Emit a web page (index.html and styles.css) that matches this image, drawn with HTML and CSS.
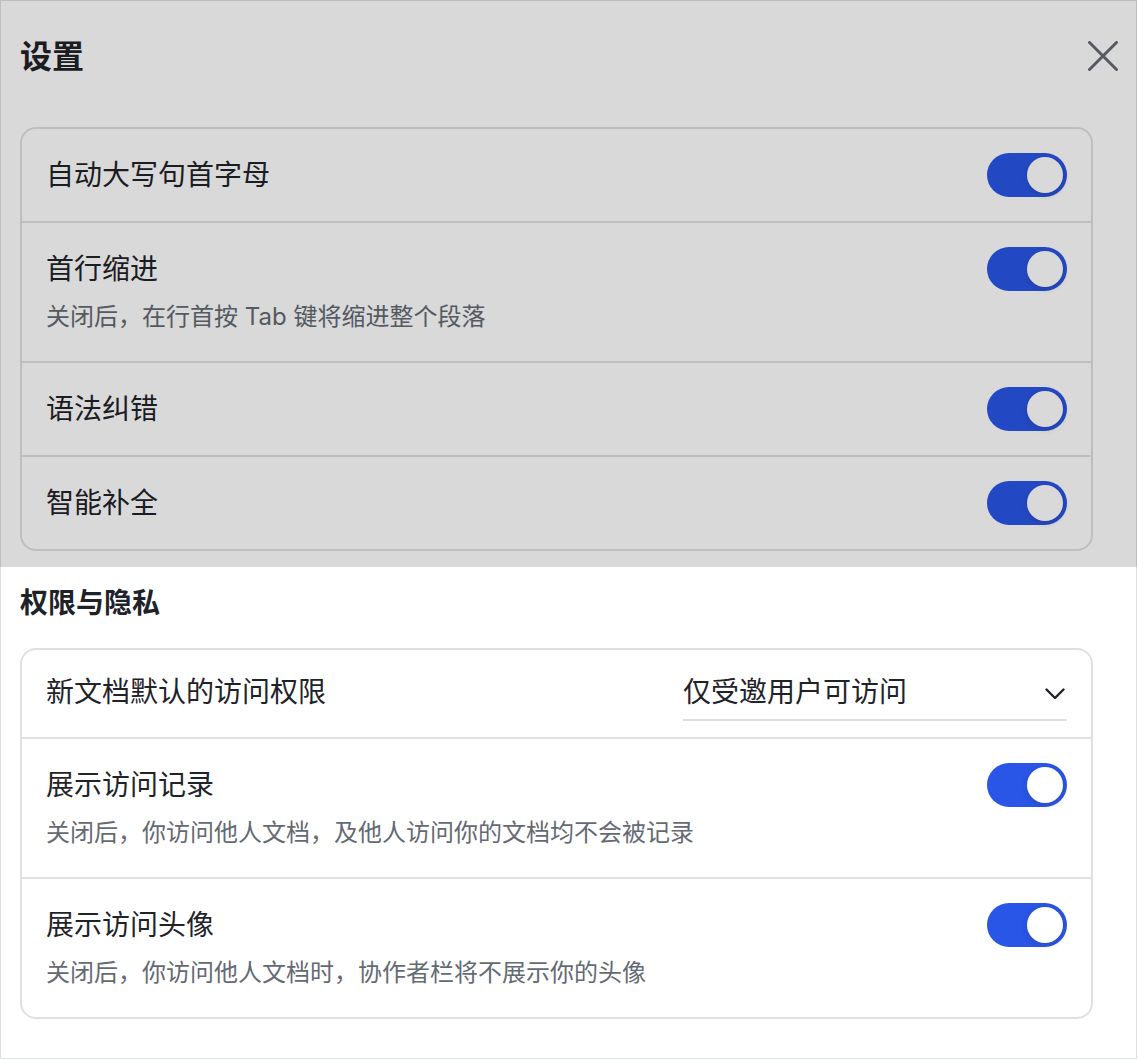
FILE: index.html
```html
<!DOCTYPE html>
<html>
<head>
    <meta charset="UTF-8">
    <title>设置</title>
    <link rel="stylesheet" href="styles.css">
</head>
<body>
    <div class="panel">
        <div class="panel-header">
            <h1 class="panel-title">设置</h1>
            <svg class="close" width="30" height="30" viewBox="0 0 30 30">
                <path d="M1.5 1.5 L28.5 28.5 M28.5 1.5 L1.5 28.5" />
            </svg>
        </div>

        <div class="card">
            <div class="row">
                <div class="row-text">
                    <div class="label">自动大写句首字母</div>
                </div>
                <span class="toggle on"><span class="knob"></span></span>
            </div>
            <div class="row">
                <div class="row-text">
                    <div class="label">首行缩进</div>
                    <div class="hint">关闭后，在行首按 Tab 键将缩进整个段落</div>
                </div>
                <span class="toggle on"><span class="knob"></span></span>
            </div>
            <div class="row">
                <div class="row-text">
                    <div class="label">语法纠错</div>
                </div>
                <span class="toggle on"><span class="knob"></span></span>
            </div>
            <div class="row">
                <div class="row-text">
                    <div class="label">智能补全</div>
                </div>
                <span class="toggle on"><span class="knob"></span></span>
            </div>
        </div>

        <h2 class="section-title">权限与隐私</h2>

        <div class="card">
            <div class="row row-select">
                <div class="row-text">
                    <div class="label">新文档默认的访问权限</div>
                </div>
                <div class="select">
                    <span class="select-value">仅受邀用户可访问</span>
                    <svg class="chevron" width="20" height="12" viewBox="0 0 20 12">
                        <path d="M1.5 1.5 L10 10 L18.5 1.5" />
                    </svg>
                </div>
            </div>
            <div class="row">
                <div class="row-text">
                    <div class="label">展示访问记录</div>
                    <div class="hint">关闭后，你访问他人文档，及他人访问你的文档均不会被记录</div>
                </div>
                <span class="toggle on"><span class="knob"></span></span>
            </div>
            <div class="row">
                <div class="row-text">
                    <div class="label">展示访问头像</div>
                    <div class="hint">关闭后，你访问他人文档时，协作者栏将不展示你的头像</div>
                </div>
                <span class="toggle on"><span class="knob"></span></span>
            </div>
        </div>
    </div>

    <!-- mask over the editor block -->
    <div class="mask"></div>
</body>
</html>
```

FILE: styles.css
```css
body {
    margin: 0;
    font-family: Inter, "Noto Sans CJK SC", sans-serif;
    color: #1f2329;
    background: #fff;
}

.panel {
    width: 1137px;
    height: 1059px;
    box-sizing: border-box;
    border: 1px solid #dee0e3;
    padding: 0 18px 0 19px;
}

.panel-header {
    height: 111px;
    display: flex;
    align-items: center;
    justify-content: space-between;
}

.panel-title {
    margin: 0;
    font-size: 32px;
    line-height: 48px;
    font-weight: 700;
}

.close {
    margin-top: -2px;
}

.close path {
    stroke: #646a73;
    stroke-width: 3;
    stroke-linecap: round;
    fill: none;
}

.card {
    margin-right: 25px;
    border: 2px solid #dee0e3;
    border-radius: 16px;
}

.panel-header + .card {
    margin-top: 15px;
}

.row {
    display: flex;
    justify-content: space-between;
    align-items: flex-start;
    padding: 24px;
}

.row + .row {
    border-top: 2px solid #dee0e3;
}

.label {
    font-size: 28px;
    line-height: 44px;
}

.hint {
    margin-top: 6px;
    font-size: 24px;
    line-height: 40px;
    color: #646a73;
}

.toggle {
    position: relative;
    flex: none;
    width: 80px;
    height: 44px;
    border-radius: 22px;
    background: #bbbfc4;
}

.toggle.on {
    background: #2956e6;
}

.knob {
    position: absolute;
    top: 4px;
    left: 4px;
    width: 36px;
    height: 36px;
    border-radius: 50%;
    background: #fff;
    box-shadow: 0 2px 6px rgba(31, 35, 41, 0.18);
}

.toggle.on .knob {
    left: 40px;
}

.section-title {
    margin: 30px 0 23px;
    font-size: 28px;
    line-height: 44px;
    font-weight: 700;
}

.row-select {
    padding: 20px 24px 16px;
}

.select {
    width: 384px;
    display: flex;
    justify-content: space-between;
    align-items: center;
    padding-bottom: 5px;
    border-bottom: 2px solid #dee0e3;
}

.select-value {
    font-size: 28px;
    line-height: 44px;
}

.chevron {
    margin: 3px 2px 0 0;
}

.chevron path {
    stroke: #1f2329;
    stroke-width: 2.4;
    stroke-linecap: round;
    stroke-linejoin: round;
    fill: none;
}

.mask {
    position: absolute;
    top: 0;
    left: 0;
    width: 1137px;
    height: 567px;
    background: rgba(0, 0, 0, 0.15);
}
```
